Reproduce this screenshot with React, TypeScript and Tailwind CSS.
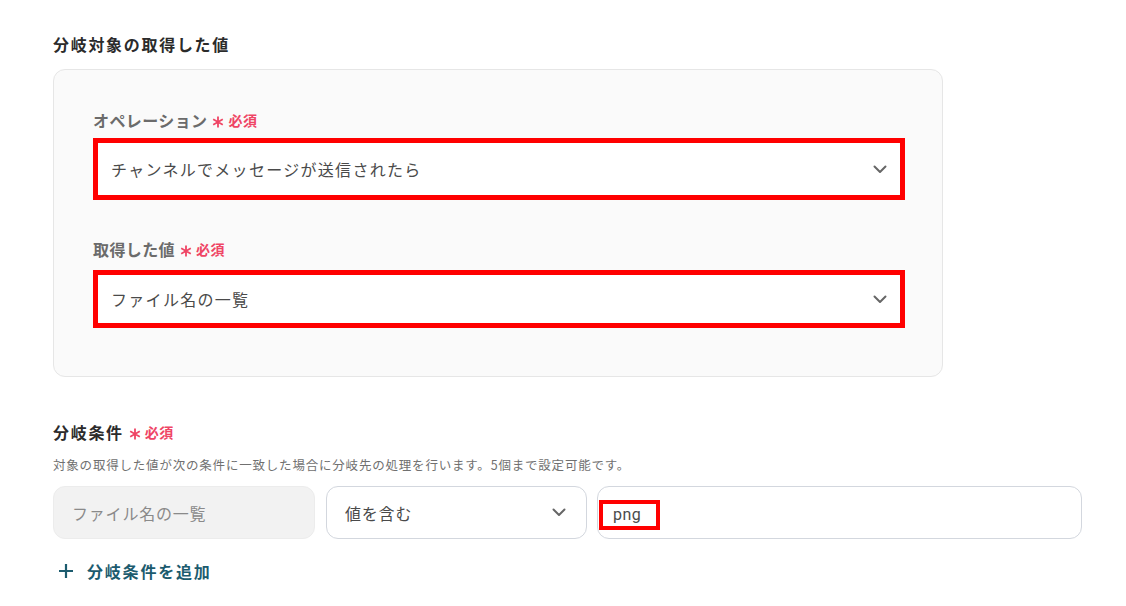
import React from "react";

const font = { fontFamily: '"Noto Sans CJK JP", "Noto Sans", sans-serif' };

function Chevron() {
  return (
    <svg width="14" height="9" viewBox="0 0 14 9" fill="none">
      <path d="M1.5 1.5 7 7l5.5-5.5" stroke="#666666" strokeWidth="2" strokeLinecap="round" strokeLinejoin="round" />
    </svg>
  );
}

function Required() {
  return (
    <span className="ml-[5px] inline-flex items-center text-[#ef4565]">
      <svg width="12" height="12" viewBox="0 0 12 12" className="mt-[3px]">
        <path d="M6 0.5v11M1.2 3.25l9.6 5.5M1.2 8.75l9.6-5.5" stroke="#ef4565" strokeWidth="1.8" />
      </svg>
      <span className="ml-[4px] text-[14px] font-bold tracking-[0.5px]">必須</span>
    </span>
  );
}

function FieldLabel({ text }: { text: string }) {
  return (
    <div className="flex h-[24px] items-center text-[16px] font-bold tracking-[0.4px] text-[#6b6b6b]">
      {text}
      <Required />
    </div>
  );
}

function MarkedSelect({ value, height }: { value: string; height: string }) {
  return (
    <div className={`w-[812px] border-[5px] border-[#ff0000] ${height}`}>
      <div className="flex h-full items-center justify-between rounded-[3px] bg-white pl-[13px] pr-[13px]">
        <span className="text-[16px] tracking-[1.3px] text-[#4a4a4a]">{value}</span>
        <Chevron />
      </div>
    </div>
  );
}

export default function App() {
  return (
    <div className="min-h-[606px] w-[1126px] bg-white pl-[53px] pt-[32px]" style={font}>
      <div className="h-[24px] text-[16px] font-bold leading-[24px] tracking-[1.7px] text-[#2b2b2b]">
        分岐対象の取得した値
      </div>

      <div className="mt-[13px] w-[890px] rounded-[12px] border border-[#e6e6e6] bg-[#fafafa] pb-[48px] pl-[39px] pt-[38px]">
        <FieldLabel text="オペレーション" />
        <div className="mt-[6px]">
          <MarkedSelect value="チャンネルでメッセージが送信されたら" height="h-[62px]" />
        </div>
        <div className="mt-[37px]">
          <FieldLabel text="取得した値" />
        </div>
        <div className="mt-[9px]">
          <MarkedSelect value="ファイル名の一覧" height="h-[58px]" />
        </div>
      </div>

      <div className="mt-[43px] flex h-[24px] items-center text-[16px] font-bold tracking-[1.7px] text-[#2b2b2b]">
        分岐条件
        <Required />
      </div>
      <div className="mt-[11px] h-[20px] text-[12.5px] leading-[20px] tracking-[0.8px] text-[#707070]">
        対象の取得した値が次の条件に一致した場合に分岐先の処理を行います。5個まで設定可能です。
      </div>

      <div className="mt-[11px] flex h-[53px] w-[1029px] gap-[10px]">
        <div className="flex w-[262px] items-center rounded-[12px] border border-[#ececec] bg-[#f2f2f2] pl-[18px] text-[16px] tracking-[0.8px] text-[#8a8a8a]">
          ファイル名の一覧
        </div>
        <div className="ml-[1px] flex w-[261px] items-center justify-between rounded-[12px] border border-[#d3d7de] bg-white pl-[18px] pr-[20px] text-[16px] tracking-[0.8px] text-[#4a4a4a]">
          値を含む
          <Chevron />
        </div>
        <div className="relative flex-1 rounded-[12px] border border-[#d3d7de] bg-white">
          <div className="absolute left-[1px] top-[13px] flex h-[30px] w-[61px] items-center border-[4px] border-[#ff0000] pl-[10px] text-[16px] tracking-[0.5px] text-[#4a4a4a]" style={{ fontFamily: '"Roboto", "Noto Sans", sans-serif' }}>
            png
          </div>
        </div>
      </div>

      <div className="mt-[20px] flex h-[24px] items-center text-[16px] font-bold tracking-[1.8px] text-[#1c5b6e]">
        <svg width="16" height="16" viewBox="0 0 16 16" className="ml-[5px] mr-[13px]">
          <path d="M8 1v14M1 8h14" stroke="#1c5b6e" strokeWidth="2.2" />
        </svg>
        分岐条件を追加
      </div>
    </div>
  );
}
